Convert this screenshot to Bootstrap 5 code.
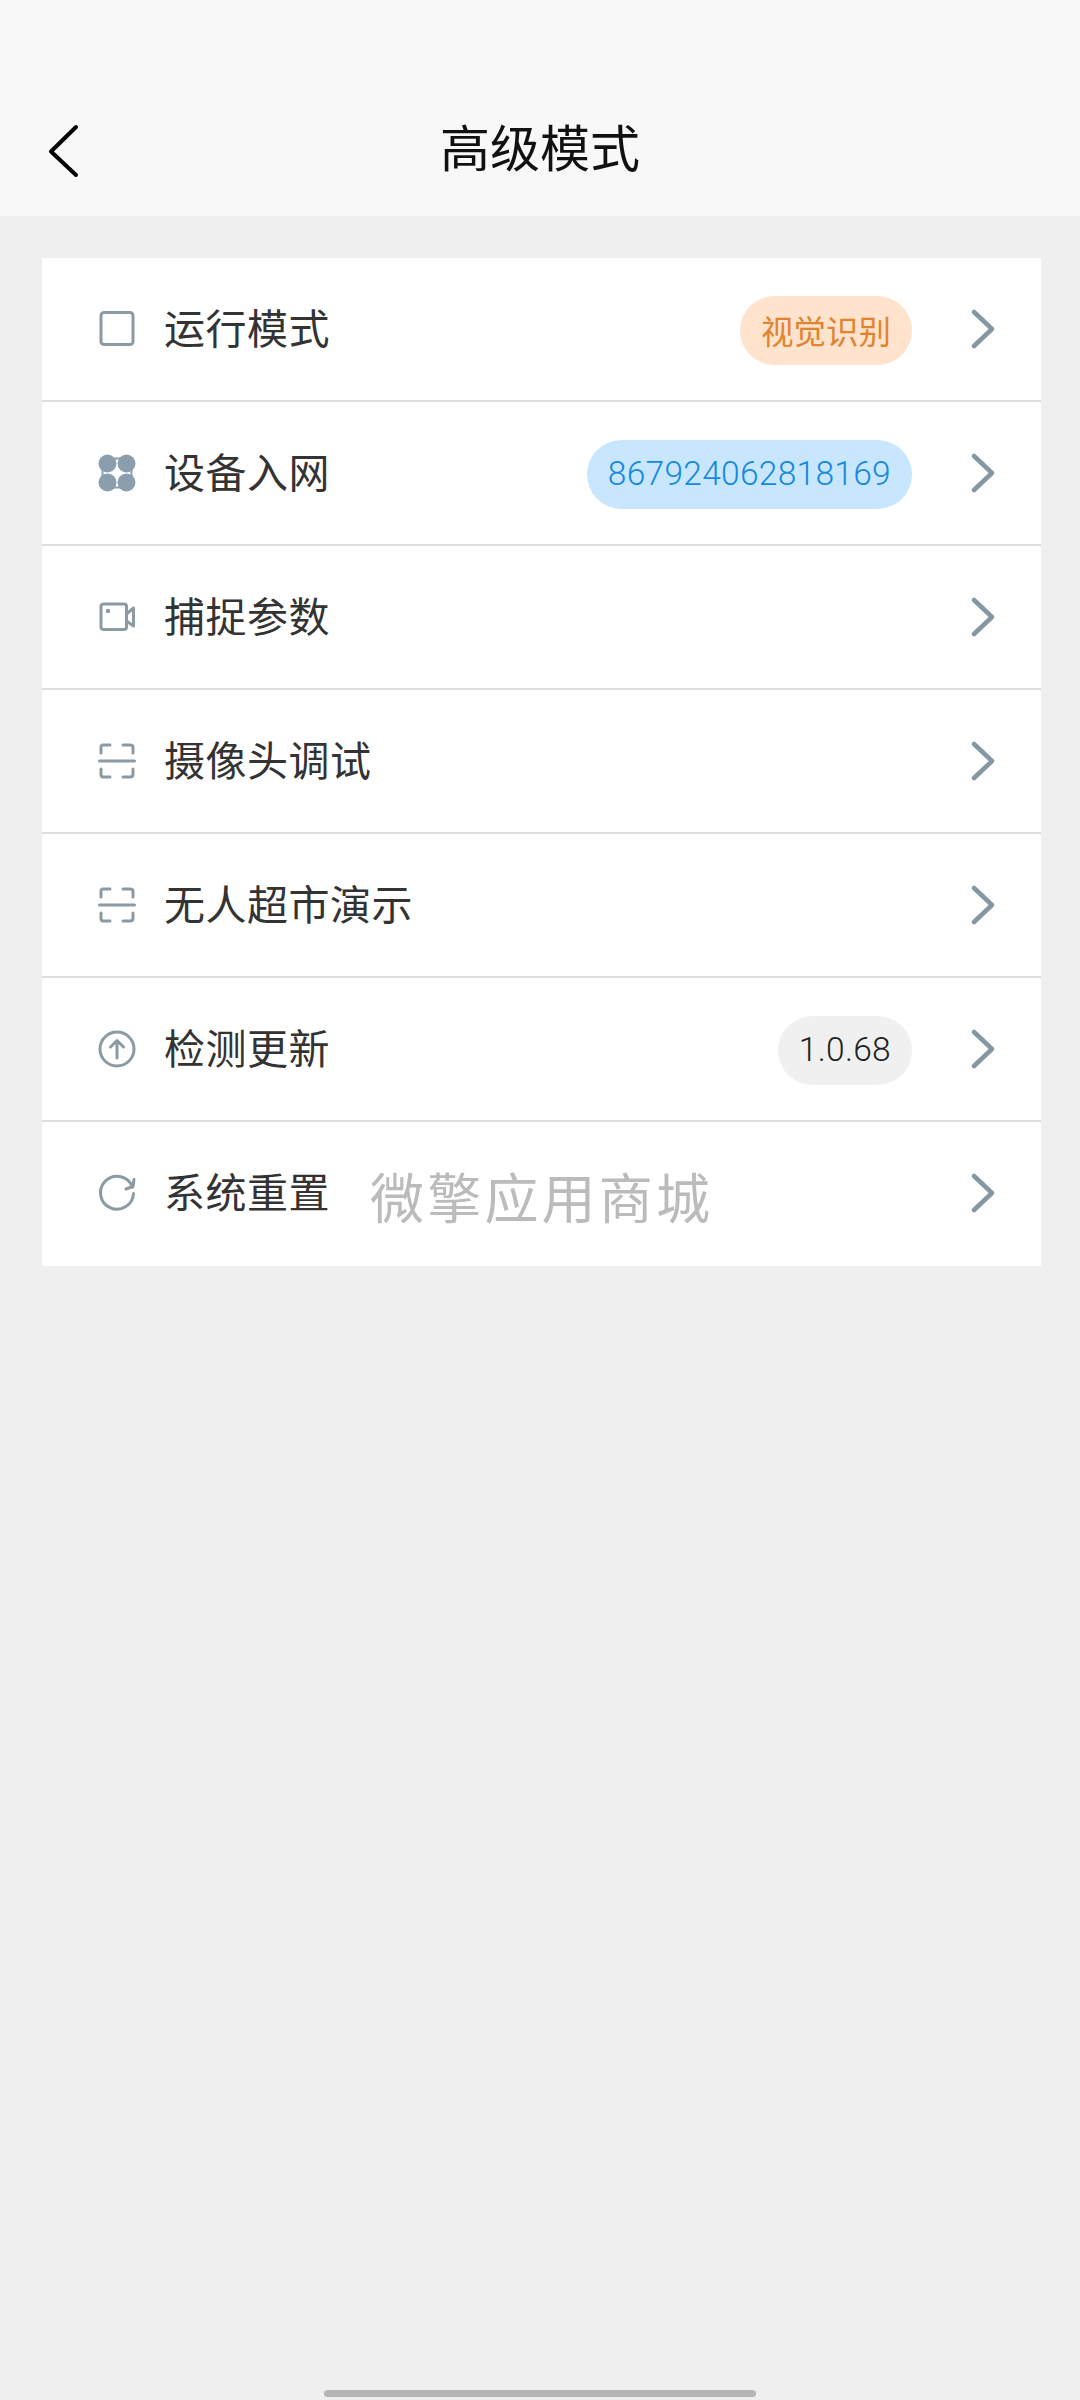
<!DOCTYPE html>
<html lang="zh-CN">
<head>
  <meta charset="UTF-8">
  <title>高级模式</title>
  <link href="https://cdn.jsdelivr.net/npm/bootstrap@5.3.0/dist/css/bootstrap.min.css" rel="stylesheet">
  <style>
    body {
      background: #efefef;
      font-family: "Noto Sans CJK SC", "Liberation Sans", sans-serif;
    }

    .top-bar {
      height: 216px;
      padding-top: 80px;
      background: #f8f8f8;
    }

    .top-side {
      width: 110px;
      padding-left: 46px;
      padding-top: 6px;
    }

    .top-title {
      font-size: 50px;
      line-height: 130px;
      padding-bottom: 6px;
      color: #111;
    }

    .top-bar svg,
    .menu-row svg {
      display: block;
    }

    .menu-box {
      margin: 42px 39px 0 42px;
      border-radius: 0;
    }

    .menu-row {
      height: 144px;
      padding: 0 46px 0 56px;
      gap: 28px;
      border: 0;
      border-bottom: 2px solid #dedede;
      color: #333;
    }

    .menu-row:last-child {
      border-bottom-color: #fff;
    }

    .menu-label {
      font-size: 41px;
      letter-spacing: 0.5px;
      padding-bottom: 4px;
    }

    .menu-note {
      font-size: 54px;
      letter-spacing: 3.2px;
      margin-left: 12px;
      padding-top: 4px;
      color: #bbb;
    }

    .tag-pill {
      height: 69px;
      padding: 0 21px;
      margin-top: 2px;
      margin-right: 31px;
      line-height: 67px;
      font-size: 32.500px;
    }

    .tag-num {
      font-family: Roboto, "Noto Sans CJK SC", sans-serif;
      font-size: 33.500px;
      font-weight: 300;
      letter-spacing: 0.3px;
    }

    .tag-orange { background: #ffe3cd; color: #e2842f; }
    .tag-blue { background: #c9e6ff; color: #1489e0; }
    .tag-gray { background: #f0f0f0; color: #222; }

    .home-bar {
      width: 432px;
      height: 7px;
      margin-bottom: 3px;
      background: #b5b5b5;
    }

    .ico { stroke: #8b9aa3; stroke-width: 3; fill: none; stroke-linecap: round; stroke-linejoin: round; }
    .ico-dots { fill: #8a9eae; stroke: none; }
    .ico-link { stroke: #8a9eae; stroke-width: 2; fill: none; }
    .arrow { stroke: #8398a3; stroke-width: 4.500; fill: none; stroke-linecap: round; stroke-linejoin: round; }
  </style>
</head>
<body class="d-flex flex-column min-vh-100">

  <!-- 顶部标题 -->
  <header class="top-bar d-flex align-items-center">
    <div class="top-side">
      <svg width="36" height="54" viewBox="0 0 36 54"><path d="M30 3 L5 27.500 L30 51" fill="none" stroke="#000" stroke-width="4" stroke-linecap="round" stroke-linejoin="round"/></svg>
    </div>
    <div class="top-title flex-grow-1 text-center">高级模式</div>
    <div class="top-side"></div>
  </header>

  <!-- 菜单 -->
  <div class="list-group menu-box">
    <div class="list-group-item menu-row d-flex align-items-center">
      <svg width="38" height="38" viewBox="0 0 38 38"><rect class="ico" x="3" y="2.500" width="32" height="32" rx="3"/></svg>
      <span class="menu-label">运行模式</span>
      <span class="tag-pill tag-orange rounded-pill ms-auto">视觉识别</span>
      <svg width="24" height="40" viewBox="0 0 24 40"><path class="arrow" d="M3 3 L21 20 L3 37"/></svg>
    </div>
    <div class="list-group-item menu-row d-flex align-items-center">
      <svg width="38" height="38" viewBox="0 0 38 38">
        <path class="ico-link" d="M9 4.500 H29 M9 33.500 H29 M4.500 9 V29 M33.500 9 V29"/>
        <circle class="ico-dots" cx="9.500" cy="9.500" r="9"/><circle class="ico-dots" cx="28.500" cy="9.500" r="9"/>
        <circle class="ico-dots" cx="9.500" cy="28.500" r="9"/><circle class="ico-dots" cx="28.500" cy="28.500" r="9"/>
      </svg>
      <span class="menu-label">设备入网</span>
      <span class="tag-pill tag-num tag-blue rounded-pill ms-auto">867924062818169</span>
      <svg width="24" height="40" viewBox="0 0 24 40"><path class="arrow" d="M3 3 L21 20 L3 37"/></svg>
    </div>
    <div class="list-group-item menu-row d-flex align-items-center">
      <svg width="38" height="38" viewBox="0 0 38 38">
        <path class="ico" d="M6 6 H26 Q28.500 6 28.500 8.500 V29 Q28.500 31.500 26 31.500 H6 Q3 31.500 3 29 V8.500 Q3 6 6 6 Z"/>
        <path class="ico" d="M28.500 16 L35.500 10 V28 L28.500 23"/>
        <circle cx="10" cy="13" r="2.200" fill="#8b9aa3"/>
      </svg>
      <span class="menu-label">捕捉参数</span>
      <svg class="ms-auto" width="24" height="40" viewBox="0 0 24 40"><path class="arrow" d="M3 3 L21 20 L3 37"/></svg>
    </div>
    <div class="list-group-item menu-row d-flex align-items-center">
      <svg width="38" height="38" viewBox="0 0 38 38">
        <path class="ico" d="M3 11 V5 Q3 3 5 3 H12 M25 3 H32 Q35 3 35 5 V11 M3 27 V32 Q3 35 5 35 H12 M25 35 H32 Q35 35 35 32 V27"/>
        <path class="ico" d="M1.500 19 H36.500"/>
      </svg>
      <span class="menu-label">摄像头调试</span>
      <svg class="ms-auto" width="24" height="40" viewBox="0 0 24 40"><path class="arrow" d="M3 3 L21 20 L3 37"/></svg>
    </div>
    <div class="list-group-item menu-row d-flex align-items-center">
      <svg width="38" height="38" viewBox="0 0 38 38">
        <path class="ico" d="M3 11 V5 Q3 3 5 3 H12 M25 3 H32 Q35 3 35 5 V11 M3 27 V32 Q3 35 5 35 H12 M25 35 H32 Q35 35 35 32 V27"/>
        <path class="ico" d="M1.500 19 H36.500"/>
      </svg>
      <span class="menu-label">无人超市演示</span>
      <svg class="ms-auto" width="24" height="40" viewBox="0 0 24 40"><path class="arrow" d="M3 3 L21 20 L3 37"/></svg>
    </div>
    <div class="list-group-item menu-row d-flex align-items-center">
      <svg width="38" height="38" viewBox="0 0 38 38">
        <circle class="ico" cx="19" cy="19" r="17"/>
        <path class="ico" d="M19 28 V11 M12.500 17 L19 10.500 L25.500 17"/>
      </svg>
      <span class="menu-label">检测更新</span>
      <span class="tag-pill tag-num tag-gray rounded-pill ms-auto">1.0.68</span>
      <svg width="24" height="40" viewBox="0 0 24 40"><path class="arrow" d="M3 3 L21 20 L3 37"/></svg>
    </div>
    <div class="list-group-item menu-row d-flex align-items-center">
      <svg width="38" height="38" viewBox="0 0 38 38">
        <path class="ico" d="M34.500 13 A16.500 16.500 0 1 0 35.500 19.500"/>
        <path class="ico" d="M28 15 L35 12.500 L36 5.500"/>
      </svg>
      <span class="menu-label">系统重置</span>
      <span class="menu-note">微擎应用商城</span>
      <svg class="ms-auto" width="24" height="40" viewBox="0 0 24 40"><path class="arrow" d="M3 3 L21 20 L3 37"/></svg>
    </div>
  </div>

  <div class="home-bar rounded-pill mt-auto mx-auto"></div>

</body>
</html>
